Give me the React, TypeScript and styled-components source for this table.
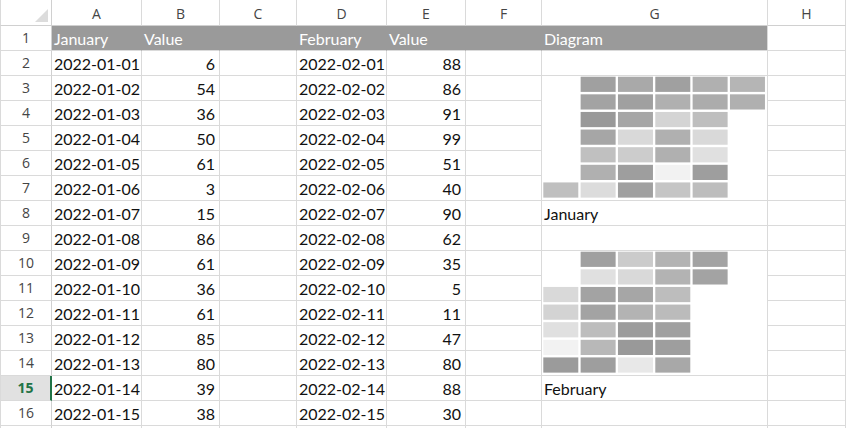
import React from "react";
import styled, { createGlobalStyle } from "styled-components";

const GlobalStyle = createGlobalStyle`
  html, body { margin: 0; padding: 0; background: #ffffff; overflow: hidden; }
  * { box-sizing: border-box; }
`;

const GRID = "#dadada";
const HEAD_LINE = "#d0d0d0";
const FILL = "#9a9a9a";

const Sheet = styled.div`
  display: grid;
  grid-template-columns: 52px 90px 78px 77px 90px 79px 76px 226px 78px;
  grid-template-rows: 26px;
  grid-auto-rows: 25px;
  width: 846px;
  font-family: Lato, "Liberation Sans", sans-serif;
`;

const Corner = styled.div`
  display: flex;
  justify-content: flex-end;
  align-items: flex-end;
  padding: 0 3px 3px 0;
  border-left: 1px solid ${GRID};
  border-right: 1px solid ${HEAD_LINE};
  border-bottom: 1px solid ${HEAD_LINE};
`;

const CornerTriangle = styled.span`
  width: 0;
  height: 0;
  border-left: 13px solid transparent;
  border-bottom: 13px solid #dcdcdc;
`;

const ColHeader = styled.div`
  display: flex;
  align-items: center;
  justify-content: center;
  padding-top: 1px;
  border-right: 1px solid ${GRID};
  border-bottom: 1px solid ${HEAD_LINE};
  font-family: "Open Sans", "Noto Sans", sans-serif;
  font-size: 14px;
  color: #454545;
`;

const RowHeader = styled.div<{ $active?: boolean }>`
  display: flex;
  align-items: flex-end;
  justify-content: center;
  padding-bottom: 2px;
  border-left: 1px solid ${GRID};
  border-right: ${(p) => (p.$active ? "2px solid #217346" : `1px solid ${HEAD_LINE}`)};
  border-bottom: 1px solid ${GRID};
  background: ${(p) => (p.$active ? "#e1e1e1" : "#ffffff")};
  font-family: "Open Sans", "Noto Sans", sans-serif;
  font-size: 14px;
  line-height: 20px;
  font-weight: ${(p) => (p.$active ? 700 : 400)};
  color: ${(p) => (p.$active ? "#217346" : "#454545")};
`;

const Cell = styled.div<{ $align?: "left" | "right"; $fill?: string; $keepEdge?: boolean }>`
  display: flex;
  align-items: flex-end;
  justify-content: ${(p) => (p.$align === "right" ? "flex-end" : "flex-start")};
  padding: 0 4px 2px 2px;
  border-right: 1px solid ${(p) => (p.$fill && !p.$keepEdge ? p.$fill : GRID)};
  border-bottom: 1px solid ${GRID};
  background: ${(p) => p.$fill ?? "#ffffff"};
  font-size: 16px;
  line-height: 19px;
  color: ${(p) => (p.$fill ? "#ffffff" : "#111111")};
  white-space: nowrap;
  overflow: hidden;
`;

const DiagramCell = styled.div`
  grid-row: span 5;
  border-right: 1px solid ${GRID};
  border-bottom: 1px solid ${GRID};
  background: #ffffff;
  svg { display: block; }
`;

type Shade = string | null;

const JAN_MAP: Shade[][] = [
  [null, "#a0a0a0", "#a9a9a9", "#a0a0a0", "#b0b0b0", "#b5b5b5"],
  [null, "#a3a3a3", "#a0a0a0", "#b0b0b0", "#acacac", "#b0b0b0"],
  [null, "#999999", "#a6a6a6", "#d4d4d4", "#bebebe", null],
  [null, "#a6a6a6", "#d9d9d9", "#b0b0b0", "#d9d9d9", null],
  [null, "#c0c0c0", "#cccccc", "#b0b0b0", "#e0e0e0", null],
  [null, "#b0b0b0", "#9e9e9e", "#f2f2f2", "#9e9e9e", null],
  ["#bfbfbf", "#dcdcdc", "#a0a0a0", "#c5c5c5", "#bdbdbd", null],
];

const FEB_MAP: Shade[][] = [
  [null, "#a0a0a0", "#cbcbcb", "#b3b3b3", "#a3a3a3", null],
  [null, "#e0e0e0", "#d9d9d9", "#b3b3b3", "#a3a3a3", null],
  ["#d9d9d9", "#a3a3a3", "#a6a6a6", "#bdbdbd", null, null],
  ["#d3d3d3", "#a3a3a3", "#b3b3b3", "#bbbbbb", null, null],
  ["#e0e0e0", "#bdbdbd", "#9c9c9c", "#a0a0a0", null, null],
  ["#f2f2f2", "#b8b8b8", "#999999", "#9e9e9e", null, null],
  ["#9b9b9b", "#9e9e9e", "#e8e8e8", "#a8a8a8", null, null],
];

const Heatmap = ({ cells }: { cells: Shade[][] }) => (
  <svg width={224} height={124} viewBox="0 0 224 124">
    {cells.map((row, r) =>
      row.map((c, ci) =>
        c ? (
          <rect
            key={`${r}-${ci}`}
            x={1.3 + ci * 37.33}
            y={0.7 + r * 17.62}
            width={35}
            height={15.2}
            fill={c}
          />
        ) : null
      )
    )}
  </svg>
);

const JAN = [6, 54, 36, 50, 61, 3, 15, 86, 61, 36, 61, 85, 80, 39, 38];
const FEB = [88, 86, 91, 99, 51, 40, 90, 62, 35, 5, 11, 47, 80, 88, 30];
const COLS = ["A", "B", "C", "D", "E", "F", "G", "H"];
const pad = (n: number) => String(n).padStart(2, "0");

const gColumn = (row: number): React.ReactNode | "skip" => {
  if (row === 3) return <DiagramCell key="g"><Heatmap cells={JAN_MAP} /></DiagramCell>;
  if (row === 10) return <DiagramCell key="g"><Heatmap cells={FEB_MAP} /></DiagramCell>;
  if ((row > 3 && row <= 7) || (row > 10 && row <= 14)) return "skip";
  if (row === 8) return <Cell key="g">January</Cell>;
  if (row === 15) return <Cell key="g">February</Cell>;
  return <Cell key="g" />;
};

export default function App() {
  const rows: React.ReactNode[] = [];
  for (let r = 2; r <= 17; r++) {
    const i = r - 2;
    const hasData = i < 15;
    const g = gColumn(r);
    rows.push(
      <React.Fragment key={r}>
        <RowHeader $active={r === 15}>{hasData ? r : ""}</RowHeader>
        <Cell>{hasData ? `2022-01-${pad(i + 1)}` : ""}</Cell>
        <Cell $align="right">{hasData ? JAN[i] : ""}</Cell>
        <Cell />
        <Cell>{hasData ? `2022-02-${pad(i + 1)}` : ""}</Cell>
        <Cell $align="right">{hasData ? FEB[i] : ""}</Cell>
        <Cell />
        {g === "skip" ? null : g}
        <Cell />
      </React.Fragment>
    );
  }

  return (
    <>
      <GlobalStyle />
      <Sheet>
        <Corner>
          <CornerTriangle />
        </Corner>
        {COLS.map((c) => (
          <ColHeader key={c}>{c}</ColHeader>
        ))}
        <RowHeader>1</RowHeader>
        <Cell $fill={FILL}>January</Cell>
        <Cell $fill={FILL}>Value</Cell>
        <Cell $fill={FILL} />
        <Cell $fill={FILL}>February</Cell>
        <Cell $fill={FILL}>Value</Cell>
        <Cell $fill={FILL} />
        <Cell $fill={FILL} $keepEdge>Diagram</Cell>
        <Cell />
        {rows}
      </Sheet>
    </>
  );
}
